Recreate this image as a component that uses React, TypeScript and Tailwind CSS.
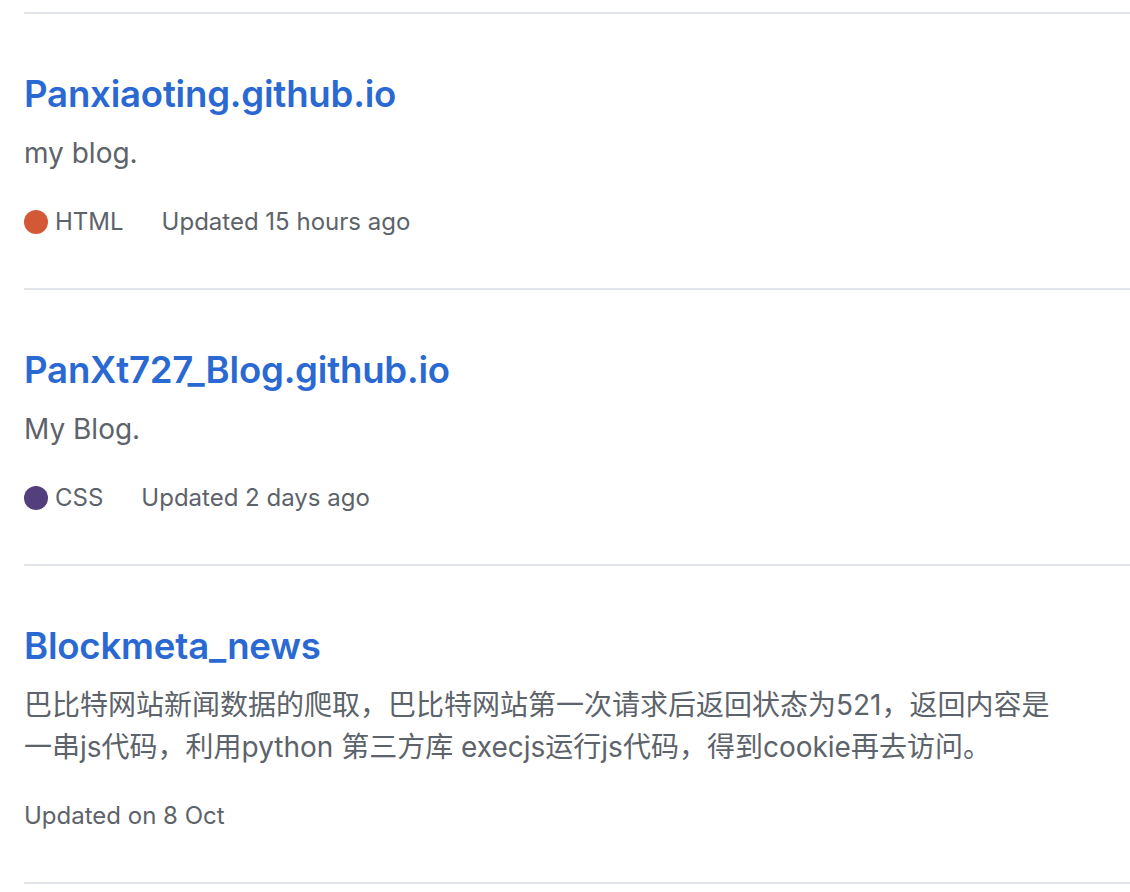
import React from "react";

type Repo = {
  name: string;
  desc: string;
  lang?: { name: string; color: string };
  updated: string;
};

const repos: Repo[] = [
  {
    name: "Panxiaoting.github.io",
    desc: "my blog.",
    lang: { name: "HTML", color: "#d35836" },
    updated: "Updated 15 hours ago",
  },
  {
    name: "PanXt727_Blog.github.io",
    desc: "My Blog.",
    lang: { name: "CSS", color: "#533f7b" },
    updated: "Updated 2 days ago",
  },
  {
    name: "Blockmeta_news",
    desc: "巴比特网站新闻数据的爬取，巴比特网站第一次请求后返回状态为521，返回内容是一串js代码，利用python 第三方库 execjs运行js代码，得到cookie再去访问。",
    updated: "Updated on 8 Oct",
  },
];

export default function App() {
  return (
    <div
      className="min-h-[892px] bg-white pl-6"
      style={{ fontFamily: 'Inter, "Noto Sans CJK SC", sans-serif' }}
    >
      <div className="h-[14px] border-b-2 border-[#e1e4e8]" />
      <ul>
        {repos.map((r) => (
          <li key={r.name} className="border-b-2 border-[#e1e4e8] pt-[55px] pb-[48px]">
            <h3 className="text-[36.6px] leading-[50px] font-semibold text-[#2a69d2] tracking-[-0.2px]">
              {r.name}
            </h3>
            <p className="mt-[13px] w-[1040px] text-[28px] leading-[42px] text-[#5d636a]">
              {r.desc}
            </p>
            <div className="mt-[30px] flex items-center text-[24px] leading-[36px] text-[#5d636a]">
              {r.lang && (
                <span className="mr-[38px] flex items-center">
                  <span
                    className="mr-[7px] inline-block h-6 w-6 rounded-full"
                    style={{ backgroundColor: r.lang.color }}
                  />
                  <span>{r.lang.name}</span>
                </span>
              )}
              <span>{r.updated}</span>
            </div>
          </li>
        ))}
      </ul>
    </div>
  );
}
